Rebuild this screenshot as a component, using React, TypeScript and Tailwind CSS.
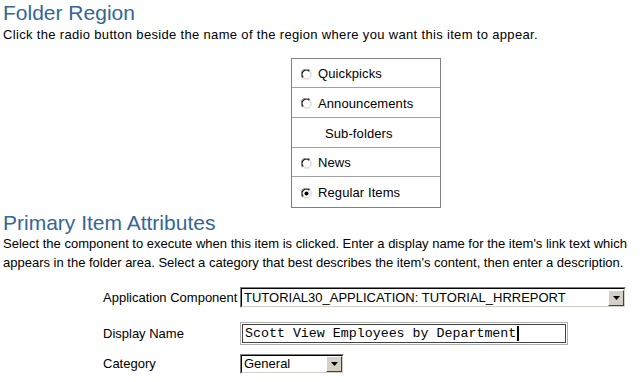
import React from "react";

function Radio({ checked }: { checked?: boolean }) {
  return (
    <svg width="11" height="11" viewBox="0 0 12 12" className="shrink-0">
      <circle cx="6" cy="6" r="5.5" fill="#ffffff" />
      <path d="M1.8 9.9 A5.3 5.3 0 0 1 9.9 1.8" stroke="#808080" strokeWidth="1.1" fill="none" />
      <path d="M2.6 9.1 A4.3 4.3 0 0 1 9.1 2.6" stroke="#000000" strokeWidth="1.1" fill="none" />
      <path d="M10.2 2.1 A5.3 5.3 0 0 1 2.1 10.2" stroke="#e8e8e8" strokeWidth="1" fill="none" />
      <path d="M9.4 2.9 A4.3 4.3 0 0 1 2.9 9.4" stroke="#d4d0c8" strokeWidth="1" fill="none" />
      {checked && <circle cx="6" cy="6" r="2.2" fill="#000000" />}
    </svg>
  );
}

function DropButton() {
  return (
    <div className="w-[16px] h-[16px] bg-[#d4d0c8] border-t border-l border-t-[#ffffff] border-l-[#ffffff] border-r border-b border-r-[#404040] border-b-[#404040] flex items-center justify-center">
      <svg width="7" height="4" viewBox="0 0 7 4">
        <path d="M0 0 H7 L3.5 4 Z" fill="#000" />
      </svg>
    </div>
  );
}

export default function App() {
  const sans = { fontFamily: '"Liberation Sans", Arial, sans-serif' };
  return (
    <div className="w-[642px] h-[382px] bg-white text-black overflow-hidden pl-[3px]" style={sans}>
      <h1 className="text-[21px] leading-[24px] text-[#336699] pt-[1px]">Folder Region</h1>
      <p className="text-[13px] tracking-[0.33px] leading-[18px] mt-[1px] whitespace-nowrap">
        Click the radio button beside the name of the region where you want this item to appear.
      </p>
      <div className="ml-[288px] mt-[14px] w-[150px] border border-[#808080] text-[13px] tracking-[0.1px]">
        <div className="h-[29px] flex items-center gap-[6px] pl-[9px] pt-[2px] border-b border-b-[#a0a0a0]">
          <Radio />
          <span>Quickpicks</span>
        </div>
        <div className="h-[30px] flex items-center gap-[6px] pl-[9px] pt-[2px] border-b border-b-[#a0a0a0]">
          <Radio />
          <span>Announcements</span>
        </div>
        <div className="h-[30px] flex items-center pl-[33px] pt-[2px] border-b border-b-[#a0a0a0]">
          <span>Sub-folders</span>
        </div>
        <div className="h-[29px] flex items-center gap-[6px] pl-[9px] pt-[2px] border-b border-b-[#a0a0a0]">
          <Radio />
          <span>News</span>
        </div>
        <div className="h-[30px] flex items-center gap-[6px] pl-[9px] pt-[2px]">
          <Radio checked />
          <span>Regular Items</span>
        </div>
      </div>
      <h1 className="text-[21px] leading-[24px] text-[#336699] mt-[3px]">Primary Item Attributes</h1>
      <p className="text-[13px] leading-[19px] whitespace-nowrap -mt-px">
        Select the component to execute when this item is clicked. Enter a display name for the item's link text which
        <br />
        appears in the folder area. Select a category that best describes the item's content, then enter a description.
      </p>
      <div className="ml-[100px] mt-[15px] text-[13px] flex flex-col whitespace-nowrap">
        <div className="flex items-center h-[21px]">
          <span className="w-[137px]">Application Component</span>
          <div className="w-[386px] h-[21px] border-t border-l border-t-[#808080] border-l-[#808080] border-r border-b border-r-[#ffffff] border-b-[#ffffff] bg-[#d4d0c8]">
            <div className="h-full border-t border-l border-t-[#000] border-l-[#000] border-r border-b border-r-[#d4d0c8] border-b-[#d4d0c8] bg-white flex items-center justify-between pl-[2px] pr-0">
              <span>TUTORIAL30_APPLICATION: TUTORIAL_HRREPORT</span>
              <DropButton />
            </div>
          </div>
        </div>
        <div className="flex items-center h-[23px] mt-[14px]">
          <span className="w-[137px]">Display Name</span>
          <div className="w-[328px] h-[23px] border border-[#b0b0b0] p-[1px]">
            <div className="h-full border border-[#404040] bg-white flex items-center pl-[2px] text-[13.3px]" style={{ fontFamily: '"Liberation Mono", "Courier New", monospace' }}>
              <span>Scott View Employees by Department</span>
              <span className="inline-block w-[2px] h-[15px] bg-black ml-[1px]" />
            </div>
          </div>
        </div>
        <div className="flex items-center h-[20px] mt-[9px]">
          <span className="w-[137px]">Category</span>
          <div className="w-[104px] h-[20px] border-t border-l border-t-[#808080] border-l-[#808080] border-r border-b border-r-[#ffffff] border-b-[#ffffff]">
            <div className="h-full border-t border-l border-t-[#000] border-l-[#000] border-r border-b border-r-[#d4d0c8] border-b-[#d4d0c8] bg-white flex items-center justify-between pl-[2px]">
              <span>General</span>
              <DropButton />
            </div>
          </div>
        </div>
      </div>
    </div>
  );
}
